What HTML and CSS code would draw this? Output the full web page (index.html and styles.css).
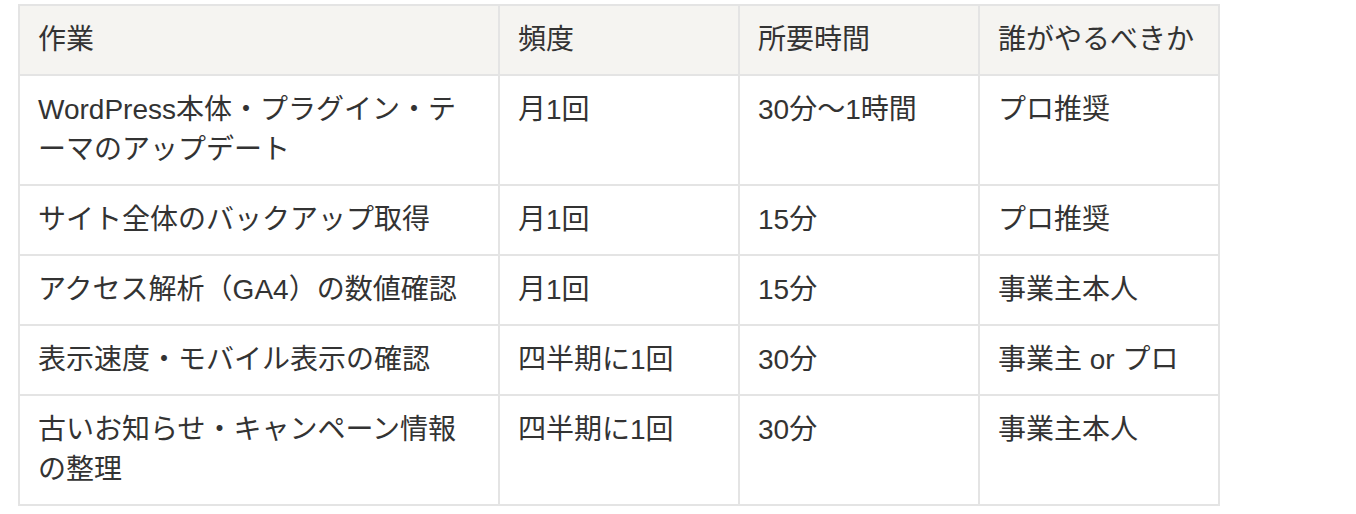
FILE: index.html
```html
<!DOCTYPE html>
<html lang="ja">
<head>
<meta charset="utf-8">
<title>保守作業表</title>
<link rel="stylesheet" href="styles.css">
</head>
<body>
<div class="wrap">
<table class="tasks">
  <colgroup>
    <col class="c-task">
    <col class="c-freq">
    <col class="c-time">
    <col class="c-who">
  </colgroup>
  <thead>
    <tr><th>作業</th><th>頻度</th><th>所要時間</th><th>誰がやるべきか</th></tr>
  </thead>
  <tbody>
    <tr><td>WordPress本体・プラグイン・テーマのアップデート</td><td>月1回</td><td>30分〜1時間</td><td>プロ推奨</td></tr>
    <tr><td>サイト全体のバックアップ取得</td><td>月1回</td><td>15分</td><td>プロ推奨</td></tr>
    <tr><td>アクセス解析（GA4）の数値確認</td><td>月1回</td><td>15分</td><td>事業主本人</td></tr>
    <tr><td>表示速度・モバイル表示の確認</td><td>四半期に1回</td><td>30分</td><td>事業主 or プロ</td></tr>
    <tr><td>古いお知らせ・キャンペーン情報の整理</td><td>四半期に1回</td><td>30分</td><td>事業主本人</td></tr>
  </tbody>
</table>
</div>
</body>
</html>
```

FILE: styles.css
```css
html, body {
  margin: 0;
  padding: 0;
  background: #ffffff;
}

.wrap {
  padding: 4px 0 0 18px;
}

.tasks {
  border-collapse: collapse;
  width: 1202px;
  table-layout: fixed;
  font-family: "Liberation Sans", "Noto Sans CJK JP", sans-serif;
  font-size: 28px;
  line-height: 40px;
  color: #333333;
  border: 2px solid #e4e4e4;
}

.c-task { width: 40%; }
.c-freq, .c-time, .c-who { width: 20%; }

.tasks th,
.tasks td {
  border: 2px solid #e4e4e4;
  padding: 14px 20px 14px 18px;
  text-align: left;
  vertical-align: top;
  font-weight: 400;
}

.tasks th {
  background: #f5f4f1;
}
```
